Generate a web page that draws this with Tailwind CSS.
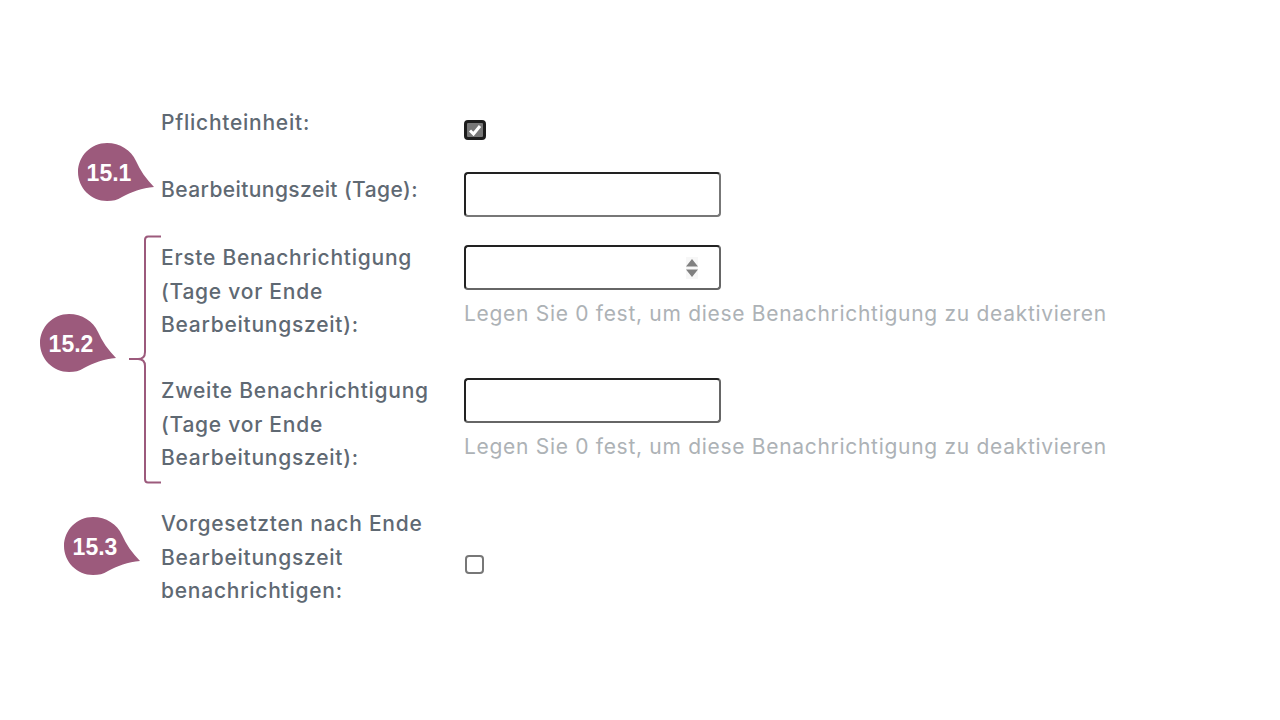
<!DOCTYPE html>
<html lang="de">
<head>
  <meta charset="UTF-8">
  <title>Einheit</title>
  <script src="https://cdn.jsdelivr.net/npm/@tailwindcss/browser@4"></script>
</head>
<body class="bg-white w-[1280px] h-[720px] overflow-hidden relative font-['Inter',sans-serif]">
  <!-- Annotationen -->
  <svg class="absolute left-0 top-0" width="1280" height="720" viewBox="0 0 1280 720" fill="none">
    <path d="M107 143 C120 143 131 150 136 161 C140 170 146 179 154 187 C142 188 131 192 122 197 C117 200 113 201 107 201 C91 201 78 188 78 172 C78 156 91 143 107 143 Z" fill="#9c5a7c"/>
    <path d="M69 314 C82 314 93 321 98 332 C102 341 108 350 116 358 C104 359 93 363 84 368 C79 371 75 372 69 372 C53 372 40 359 40 343 C40 327 53 314 69 314 Z" fill="#9c5a7c"/>
    <path d="M93 517 C106 517 117 524 122 535 C126 544 132 553 140 561 C128 562 117 566 108 571 C103 574 99 575 93 575 C77 575 64 562 64 546 C64 530 77 517 93 517 Z" fill="#9c5a7c"/>
    <path d="M161 236.500 H148 Q145 236.500 145 240 V352 Q145 359 138 359 H129 M138 359 Q145 359 145 366 V479 Q145 482.500 148 482.500 H161" stroke="#9c5a7c" stroke-width="2"/>
  </svg>
  <span class="absolute left-[78px] top-[159px] w-[62px] text-center text-[23px] leading-[28px] font-bold text-white font-['Liberation_Sans',sans-serif]">15.1</span>
  <span class="absolute left-[40px] top-[330px] w-[62px] text-center text-[23px] leading-[28px] font-bold text-white font-['Liberation_Sans',sans-serif]">15.2</span>
  <span class="absolute left-[64px] top-[533px] w-[62px] text-center text-[23px] leading-[28px] font-bold text-white font-['Liberation_Sans',sans-serif]">15.3</span>

  <!-- Formular -->
  <form class="pt-[106px] pl-[161px] flex flex-col text-[21px] leading-[33.5px] tracking-[0.75px] font-medium text-[#5f6973]">
    <div class="flex h-[67px]">
      <label class="w-[303px]">Pflichteinheit:</label>
      <div class="pt-[14px]">
        <div class="w-[22px] h-[20px] rounded-[4px] border-[3px] border-[#1c1c1c] bg-[#777] flex items-center justify-center">
          <svg width="14" height="12" viewBox="0 0 14 12" fill="none"><path d="M2 6.500 L5.500 10 L12 2" stroke="#fff" stroke-width="3"/></svg>
        </div>
      </div>
    </div>
    <div class="flex h-[68px]">
      <label class="w-[303px] tracking-[0.42px]">Bearbeitungszeit (Tage):</label>
      <div class="w-[257px] h-[45px] -mt-[1px] rounded-[4px] border-2 border-[#222] border-b-[#777] border-r-[#777] bg-white"></div>
    </div>
    <div class="flex h-[133px]">
      <label class="w-[303px]">Erste Benachrichtigung<br>(Tage vor Ende<br>Bearbeitungszeit):</label>
      <div class="pt-[4px]">
        <div class="w-[257px] h-[45px] rounded-[4px] border-2 border-[#222] border-b-[#666] border-r-[#666] bg-white flex items-center justify-end pr-[21px]">
          <div class="bg-[#f7f7f7] py-[2px]">
            <svg class="block" width="12" height="18" viewBox="0 0 12 18"><path d="M6 0 L12 7.500 H0 Z M0 10.500 H12 L6 18 Z" fill="#808080"/></svg>
          </div>
        </div>
        <p class="mt-[7px] whitespace-nowrap font-normal text-[#adb2b6] tracking-[0.7px]">Legen Sie 0 fest, um diese Benachrichtigung zu deaktivieren</p>
      </div>
    </div>
    <div class="flex h-[133px]">
      <label class="w-[303px]">Zweite Benachrichtigung<br>(Tage vor Ende<br>Bearbeitungszeit):</label>
      <div class="pt-[4px]">
        <div class="w-[257px] h-[45px] rounded-[4px] border-2 border-[#222] border-b-[#666] border-r-[#666] bg-white"></div>
        <p class="mt-[7px] whitespace-nowrap font-normal text-[#adb2b6] tracking-[0.7px]">Legen Sie 0 fest, um diese Benachrichtigung zu deaktivieren</p>
      </div>
    </div>
    <div class="flex items-center">
      <label class="w-[303px]">Vorgesetzten nach Ende<br>Bearbeitungszeit<br>benachrichtigen:</label>
      <div class="w-[19px] h-[19px] ml-[1px] mt-[15px] rounded-[4px] border-2 border-[#777] bg-white"></div>
    </div>
  </form>
</body>
</html>
